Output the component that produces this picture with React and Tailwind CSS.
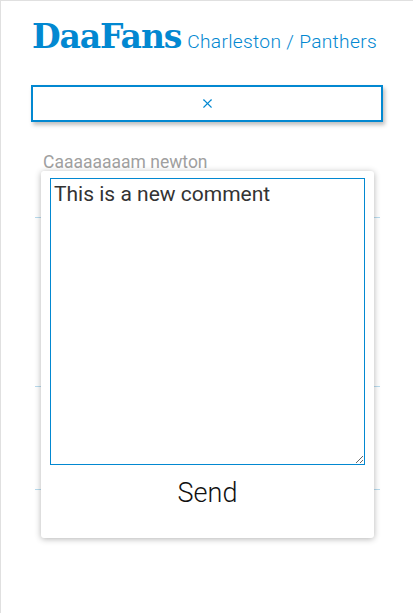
import { useState } from 'react'
import { X } from 'lucide-react'

const comments = [
  { id: 1, author: 'Caaaaaaaam newton', h: 'h-[65px]' },
  { id: 2, author: '', h: 'h-[169px]' },
  { id: 3, author: '', h: 'h-[103px]' },
]

export default function App() {
  const [text, setText] = useState('This is a new comment')

  return (
    <div className="relative w-[413px] h-[613px] overflow-hidden bg-white border-l border-t border-[#e0e0e0] font-['Roboto',sans-serif]">
      {/* Header */}
      <div className="flex items-baseline gap-[6px] pl-[31px] pt-[12px] h-[84px]">
        <h1 className="font-['DejaVu_Serif',serif] font-bold text-[33px] tracking-[-1.1px] text-[#0288d1] leading-[48px]">
          DaaFans
        </h1>
        <span className="text-[19.2px] font-light text-[#0288d1] tracking-[0.3px]">
          Charleston / Panthers
        </span>
      </div>

      {/* Search bar */}
      <div className="mx-[30px] w-[352px] h-[37px] border-2 border-[#0288d1] bg-white shadow-[2px_3px_4px_rgba(0,0,0,0.25)] flex items-center justify-center">
        <X className="w-[15px] h-[15px] text-[#0288d1]" strokeWidth={1.8} />
      </div>

      {/* Comments list */}
      <div className="mt-[31px] ml-[34px] w-[345px]">
        {comments.map((c) => (
          <div key={c.id} className={`${c.h} border-b border-[#b9dcef] pl-[8px]`}>
            <p className="text-[17.5px] text-[#a0a0a0] leading-[18px]">{c.author}</p>
          </div>
        ))}
      </div>

      {/* Comment modal */}
      <div className="absolute left-[40px] top-[170px] w-[333px] h-[367px] bg-white rounded-[3px] shadow-[0_1px_6px_rgba(0,0,0,0.3)] flex flex-col items-center pt-[7px]">
        <textarea
          value={text}
          onChange={(e) => setText(e.target.value)}
          className="w-[315px] h-[287px] border border-[#0288d1] outline-none px-[3px] py-[1px] text-[21px] leading-[28px] text-[#333] font-['Roboto',sans-serif] resize"
        />
        <button className="mt-[10px] text-[27px] font-light text-[#111] font-['Roboto',sans-serif] leading-[36px]">
          Send
        </button>
      </div>
    </div>
  )
}
